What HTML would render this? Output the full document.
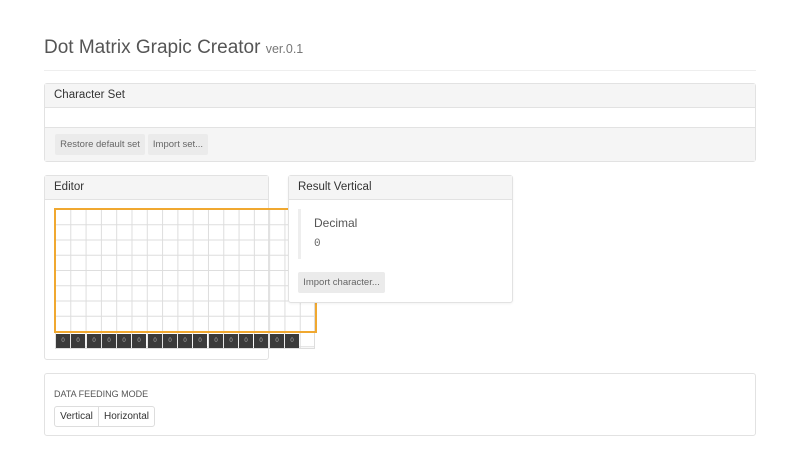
<!DOCTYPE html>
<html><head><meta charset="utf-8"><style>
*{box-sizing:border-box;margin:0;padding:0}
body{width:800px;height:450px;background:#fff;font-family:"Liberation Sans",sans-serif;color:#333;position:relative;overflow:hidden}
.a{position:absolute}
.panel{border:1px solid #e2e2e2;border-radius:3px;background:#fff}
.hd{background:#f5f5f5;border-bottom:1px solid #e2e2e2;font-size:11.5px;padding:0 9px;height:24px;line-height:23px;color:#333}
.btn{position:absolute;background:#ebebeb;border-radius:2px;font-size:9.5px;color:#666;text-align:center;line-height:21px;height:21px}
.k{position:absolute;top:334px;width:14px;height:14px;background:#3a3a3a;color:#aaa;font-size:6px;text-align:center;line-height:14px}
</style></head><body>
<div class="a" style="left:44px;top:37px;font-size:19px;color:#555">Dot Matrix Grapic Creator <span style="font-size:12.5px;color:#777">ver.0.1</span></div>
<div class="a" style="left:44px;top:70px;width:712px;height:1px;background:#eee"></div>

<div class="a panel" style="left:44px;top:83px;width:712px;height:79px">
<div class="hd">Character Set</div>
<div class="a" style="left:0;top:43px;width:710px;height:34px;background:#f5f5f5;border-top:1px solid #e2e2e2"></div>
<div class="btn" style="left:10px;top:50px;width:90px">Restore default set</div>
<div class="btn" style="left:103px;top:50px;width:60px">Import set...</div>
</div>

<div class="a panel" style="left:44px;top:175px;width:225px;height:185px">
<div class="hd">Editor</div>
</div>
<div class="a" style="left:55px;top:209px;width:260px;height:140px;border-right:1px solid #ddd;border-bottom:1px solid #ddd;background-image:linear-gradient(90deg,#ddd 1px,transparent 1px),linear-gradient(#ddd 1px,transparent 1px);background-size:15.3px 15.25px"></div>
<div class="a" style="left:54px;top:208px;width:263px;height:125px;border:2px solid #f0a830"></div>
<div class="k" style="left:56px">0</div><div class="k" style="left:71px">0</div><div class="k" style="left:87px">0</div><div class="k" style="left:102px">0</div><div class="k" style="left:117px">0</div><div class="k" style="left:132px">0</div><div class="k" style="left:148px">0</div><div class="k" style="left:163px">0</div><div class="k" style="left:178px">0</div><div class="k" style="left:193px">0</div><div class="k" style="left:209px">0</div><div class="k" style="left:224px">0</div><div class="k" style="left:239px">0</div><div class="k" style="left:254px">0</div><div class="k" style="left:270px">0</div><div class="k" style="left:285px">0</div>

<div class="a panel" style="left:288px;top:175px;width:225px;height:128px;box-shadow:0 1px 2px rgba(0,0,0,.05)">
<div class="hd">Result Vertical</div>
<div class="a" style="left:9px;top:33px;width:3px;height:50px;background:#eee"></div>
<div class="a" style="left:25px;top:40px;font-size:12px;color:#555">Decimal</div>
<div class="a" style="left:25px;top:62px;font-size:11px;color:#666;font-family:'Liberation Mono',monospace">0</div>
<div class="btn" style="left:9px;top:96px;width:87px">Import character...</div>
</div>

<div class="a panel" style="left:44px;top:373px;width:712px;height:63px">
<div class="a" style="left:9px;top:15px;font-size:9px;color:#555">DATA FEEDING MODE</div>
<div class="a" style="left:9px;top:32px;width:101px;height:21px;border:1px solid #ddd;border-radius:3px;font-size:10px;line-height:19px;color:#333">
<span class="a" style="left:0;width:44px;text-align:center;border-right:1px solid #ddd;height:19px">Vertical</span>
<span class="a" style="left:44px;width:55px;text-align:center">Horizontal</span>
</div>
</div>
</body></html>
